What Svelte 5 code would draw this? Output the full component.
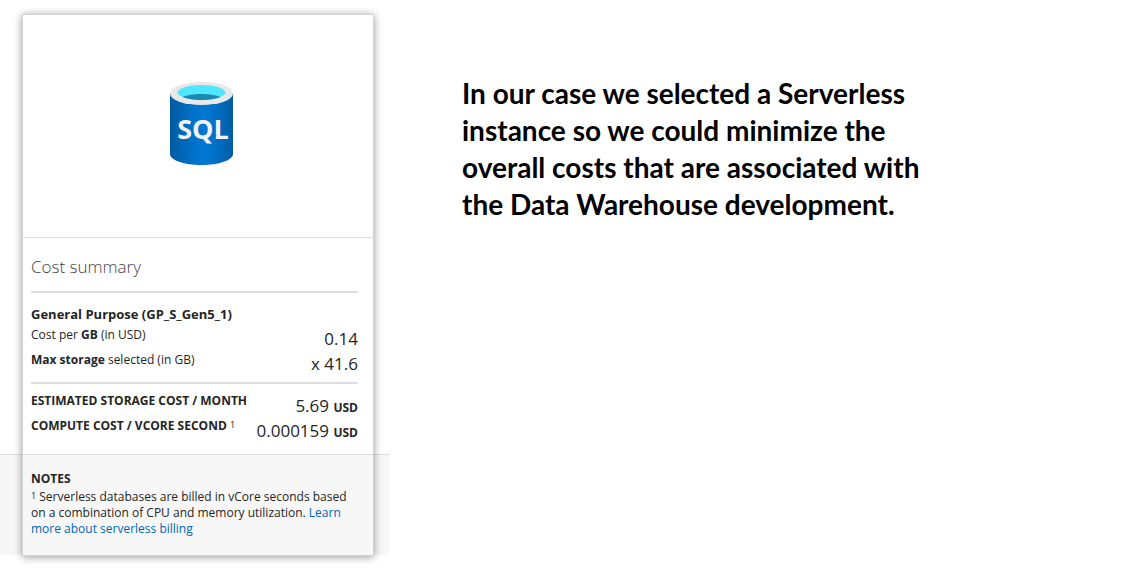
<script>
  const prices = [
    { strong: 'GB', before: 'Cost per ', after: ' (in USD)', value: '0.14' },
    { strong: 'Max storage', before: '', after: ' selected (in GB)', value: 'x 41.6' }
  ];
  const totals = [
    { label: 'ESTIMATED STORAGE COST / MONTH', value: '5.69' },
    { label: 'COMPUTE COST / VCORE SECOND', note: '1', value: '0.000159' }
  ];
</script>

<main class="page">
  <aside class="panel">
    <div class="band"></div>
    <section class="card">
      <div class="upper">
        <div class="hero">
          <svg class="logo" viewBox="0 0 63 83" role="img" aria-label="SQL database">
            <defs>
              <linearGradient id="body" x1="0" x2="1" y1="0" y2="0">
                <stop offset="0" stop-color="#005ba1" />
                <stop offset="0.08" stop-color="#0060a9" />
                <stop offset="0.36" stop-color="#0071c8" />
                <stop offset="0.52" stop-color="#0078d4" />
                <stop offset="0.64" stop-color="#0074cd" />
                <stop offset="0.82" stop-color="#006abb" />
                <stop offset="1" stop-color="#005ba1" />
              </linearGradient>
            </defs>
            <path d="M0 11.5V72C0 78.2 14.1 83 31.5 83S63 78.2 63 72V11.5Z" fill="url(#body)" />
            <ellipse cx="31.5" cy="11.5" rx="31.5" ry="11.5" fill="#e8e8e8" />
            <ellipse cx="31.5" cy="10.5" rx="24" ry="7.5" fill="#50e6ff" />
            <path d="M12.5 15C17 12.9 24 12 31.5 12S46 12.9 50.5 15C46 17.1 39 18 31.5 18S17 17.1 12.5 15Z" fill="#198ab3" />
            <text x="33" y="57" text-anchor="middle">SQL</text>
          </svg>
        </div>
        <div class="costs">
          <h2>Cost summary</h2>
          <h3>General Purpose (GP_S_Gen5_1)</h3>
          <dl class="prices">
            {#each prices as row}
              <div class="row">
                <dt>{row.before}<b>{row.strong}</b>{row.after}</dt>
                <dd>{row.value}</dd>
              </div>
            {/each}
          </dl>
          <dl class="totals">
            {#each totals as row}
              <div class="row">
                <dt><b>{row.label}</b>{#if row.note}{' '}<sup>{row.note}</sup>{/if}</dt>
                <dd>{row.value} <small>USD</small></dd>
              </div>
            {/each}
          </dl>
        </div>
      </div>
      <footer class="notes">
        <h4>NOTES</h4>
        <p><sup>1</sup> Serverless databases are billed in vCore seconds based on a combination of CPU and memory utilization. <a href="#billing">Learn more about serverless billing</a></p>
      </footer>
    </section>
  </aside>
  <p class="caption">In our case we selected a Serverless instance so we could minimize the overall costs that are associated with the Data Warehouse development.</p>
</main>

<style>
  :global(body) {
    margin: 0;
    background: #fff;
  }
  h2, h3, h4, p, dl, dd {
    margin: 0;
  }
  .page {
    display: grid;
    grid-template-columns: minmax(380px, 389fr) 736fr;
    align-items: start;
    padding-bottom: 20px;
  }
  .panel {
    display: grid;
    grid-template-columns: 22px 1fr 15px;
    grid-template-rows: auto auto;
    padding-top: 14px;
    font-family: "Open Sans", "Noto Sans", sans-serif;
    font-size: 12px;
    line-height: 16px;
    color: #252525;
  }
  .band {
    grid-area: 2 / 1 / 3 / 4;
    margin-bottom: 1px;
    background: #f7f7f7;
    border-top: 1px solid #dadde0;
  }
  .card {
    grid-area: 1 / 2 / 3 / 3;
    display: grid;
    grid-template-rows: subgrid;
    border: 1px solid #d0d2d4;
    box-shadow: 0 1px 8px rgba(0, 0, 0, 0.4);
  }
  .upper {
    background: #fff;
  }
  .hero {
    padding: 67px 0 72px;
    border-bottom: 1px solid #d9dde0;
    text-align: center;
  }
  .logo {
    display: inline-block;
    width: 63px;
    height: 83px;
    margin-right: -6px;
    vertical-align: top;
  }
  .logo text {
    font-family: "Open Sans", sans-serif;
    font-size: 27px;
    font-weight: 700;
    fill: #f2f2f2;
  }
  .costs {
    padding: 16px 15px 11px 8px;
  }
  h2 {
    padding-bottom: 12px;
    border-bottom: 2px solid #d9dee2;
    font-size: 17px;
    font-weight: 300;
    line-height: 25px;
    color: #444;
  }
  h3 {
    padding-top: 11px;
    font-size: 13px;
    font-weight: 700;
    line-height: 20px;
  }
  .row {
    display: flex;
    justify-content: space-between;
    height: 25px;
    white-space: nowrap;
  }
  .prices dt {
    padding-top: 3px;
  }
  dd {
    padding-top: 2px;
    font-size: 17px;
    line-height: 25px;
  }
  small {
    font-size: 12px;
    font-weight: 700;
  }
  .totals {
    margin-top: 8px;
    padding-top: 9px;
    border-top: 2px solid #d9dee2;
  }
  .totals dd {
    padding-top: 0;
  }
  sup {
    font-size: 9px;
    line-height: 1;
    vertical-align: 2px;
  }
  .notes {
    padding: 15px 24px 18px 8px;
    background: #f7f7f7;
    border-top: 1px solid #dadde0;
  }
  h4 {
    font-size: 12px;
    font-weight: 700;
    line-height: 18px;
    margin-bottom: 1px;
  }
  a {
    color: #0066b8;
    text-decoration: none;
  }
  .caption {
    max-width: 470px;
    padding: 75px 24px 0 73px;
    font-family: Lato, Carlito, sans-serif;
    font-size: 28px;
    font-weight: 700;
    line-height: 37px;
    color: #000;
  }
</style>
